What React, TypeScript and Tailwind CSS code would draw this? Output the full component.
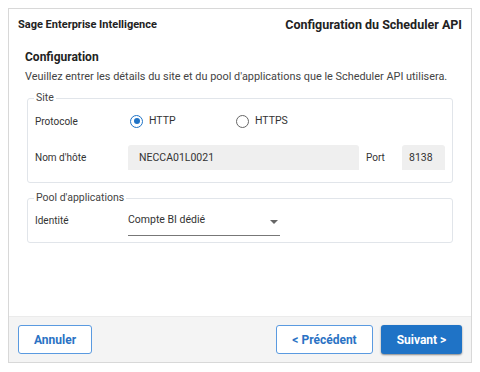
import React from "react";

export default function App() {
  return (
    <div className="w-[480px] h-[372px] bg-white pt-[8px] pl-[8px]" style={{ fontFamily: "Roboto, 'Liberation Sans', sans-serif" }}>
      <div className="w-[464px] h-[355px] border border-[#d8d8d8] flex flex-col bg-white">
        <div className="h-[32px] flex items-center justify-between pl-[9px] pr-[9px] pt-[1px]">
          <span className="text-[11px] font-bold text-[#222]">Sage Enterprise Intelligence</span>
          <span className="text-[12.5px] font-bold text-[#222]">Configuration du Scheduler API</span>
        </div>
        <div className="flex-1 px-[16px] pt-[8px]">
          <div className="text-[12px] font-bold text-[#222] leading-[16px]">Configuration</div>
          <div className="text-[10.9px] whitespace-nowrap text-[#444] leading-[16px] mt-[4px]">
            Veuillez entrer les détails du site et du pool d'applications que le Scheduler API utilisera.
          </div>
          <fieldset className="mt-[7px] mx-[2px] border border-[#e1e5ea] rounded-[3px] h-[91px] px-[7px]">
            <legend className="text-[10.5px] text-[#444] px-[2px] ml-[-1px] leading-[12px]">Site</legend>
            <div className="flex items-center h-[24px] mt-[5px] text-[10px] text-[#333]">
              <span className="w-[95px]">Protocole</span>
              <label className="flex items-center w-[106px]">
                <span className="w-[13px] h-[13px] rounded-full border-[1.5px] border-[#1f73c6] flex items-center justify-center">
                  <span className="w-[6px] h-[6px] rounded-full bg-[#1f73c6]" />
                </span>
                <span className="ml-[6px] text-[10.5px] text-[#333]">HTTP</span>
              </label>
              <label className="flex items-center">
                <span className="w-[13px] h-[13px] rounded-full border-[1.5px] border-[#666]" />
                <span className="ml-[6px] text-[10.5px] text-[#333]">HTTPS</span>
              </label>
            </div>
            <div className="flex items-center h-[25px] mt-[12px] text-[10px] text-[#333]">
              <span className="w-[93px]">Nom d'hôte</span>
              <div className="w-[231px] h-[25px] bg-[#efefef] rounded-t-[3px] flex items-center pl-[11px] text-[10.5px] text-[#333]">NECCA01L0021</div>
              <span className="ml-[7px] w-[36px] self-start pt-[5px]">Port</span>
              <div className="w-[43px] h-[25px] bg-[#efefef] rounded-t-[3px] flex items-center pl-[7px] text-[10.5px] text-[#333]">8138</div>
            </div>
          </fieldset>
          <fieldset className="mt-[9px] mx-[2px] border border-[#e1e5ea] rounded-[3px] h-[51px] px-[7px]">
            <legend className="text-[10.5px] text-[#444] px-[2px] ml-[-1px] leading-[12px]">Pool d'applications</legend>
            <div className="flex items-center h-[31px] mt-[1px] text-[10px] text-[#333]">
              <span className="w-[93px]">Identité</span>
              <div className="w-[152px] h-[31px] border-b border-[#777] flex items-center justify-between pr-[2px] text-[10.5px]">
                <span>Compte BI dédié</span>
                <svg width="8" height="5" viewBox="0 0 8 5" className="mt-[4px]"><path d="M0 0 L8 0 L4 4 Z" fill="#666" /></svg>
              </div>
            </div>
          </fieldset>
        </div>
        <div className="h-[46px] bg-[#f4f4f4] border-t border-[#ebebeb] flex items-start pt-[8px] px-[9px]">
          <button className="w-[74px] h-[29px] border border-[#5a9ae0] rounded-[3px] bg-white text-[12px] font-bold text-[#2a72c4]">Annuler</button>
          <div className="flex-1" />
          <button className="w-[97px] h-[29px] border border-[#5a9ae0] rounded-[3px] bg-white text-[12px] font-bold text-[#2a72c4]">&lt; Précédent</button>
          <button className="ml-[8px] w-[81px] h-[29px] rounded-[3px] bg-[#1f73c6] text-[12px] font-bold text-white shadow-[0_1px_2px_rgba(0,0,0,0.45)]">Suivant &gt;</button>
        </div>
      </div>
    </div>
  );
}
